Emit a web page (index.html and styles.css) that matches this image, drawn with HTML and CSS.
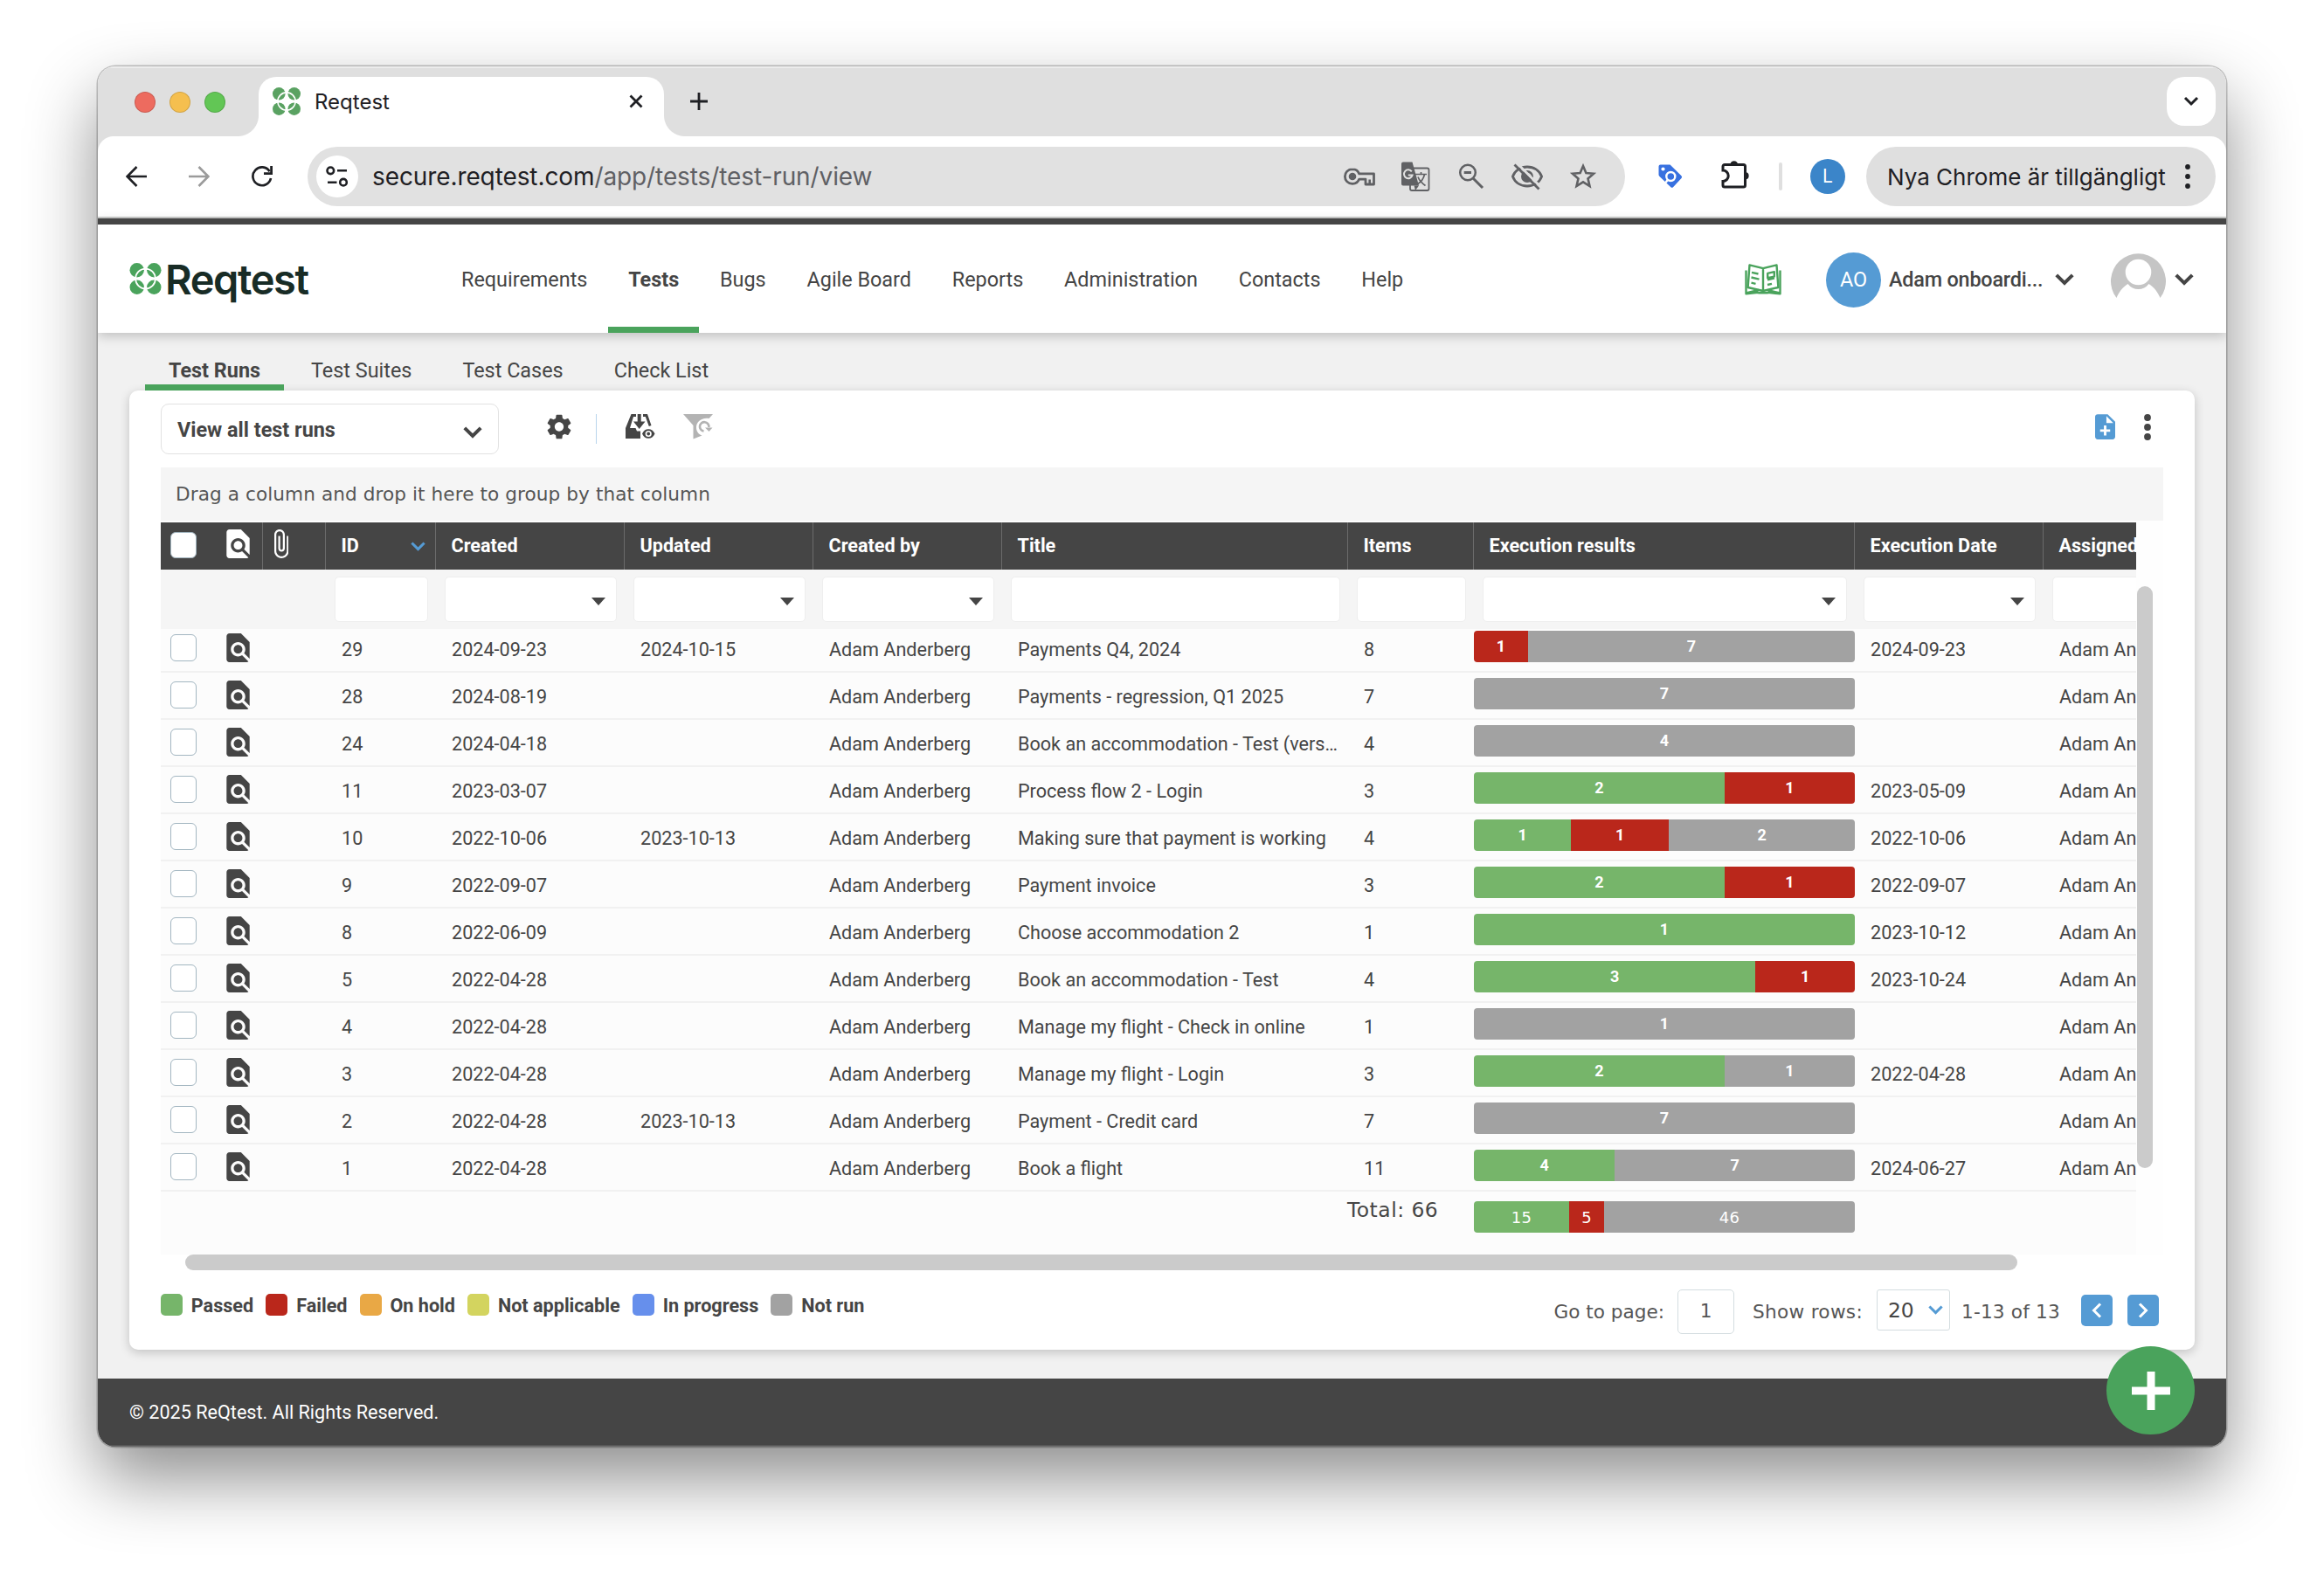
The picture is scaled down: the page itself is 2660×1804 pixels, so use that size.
FILE: index.html
```html
<!DOCTYPE html>
<html lang="en">
<head>
<meta charset="utf-8">
<title>Reqtest</title>
<link rel="stylesheet" href="styles.css">
</head>
<body>
<svg class="defs" aria-hidden="true">
  <symbol id="mark" viewBox="0 0 36 36">
    <g fill="currentColor"><circle cx="8.2" cy="8.2" r="8.2"/><circle cx="27.8" cy="8.2" r="8.2"/><circle cx="8.2" cy="27.8" r="8.2"/><circle cx="27.8" cy="27.8" r="8.2"/></g>
    <circle cx="18" cy="18" r="11.4" fill="none" stroke="#fff" stroke-width="1.8"/>
  </symbol>
  <symbol id="doc" viewBox="4 2 16 20"><path fill="currentColor" d="M20 19.59V8l-6-6H6c-1.1 0-1.99.9-1.99 2L4 20c0 1.1.89 2 1.99 2H18c.45 0 .85-.15 1.19-.4l-4.43-4.43c-.8.52-1.74.83-2.76.83-2.76 0-5-2.24-5-5s2.24-5 5-5 5 2.24 5 5c0 1.02-.31 1.96-.83 2.75L20 19.59zM9 13c0 1.66 1.34 3 3 3s3-1.34 3-3-1.34-3-3-3-3 1.34-3 3z"/></symbol>
  <symbol id="chev" viewBox="0 0 22 14"><path d="M1.8 1.8L11 11L20.2 1.8" fill="none" stroke="currentColor" stroke-width="4"/></symbol>
</svg>

<div class="window">
  <div class="tabstrip">
    <div class="lights"><i class="red"></i><i class="yellow"></i><i class="green"></i></div>
    <div class="tab">
      <svg class="favicon"><use href="#mark"/></svg>
      <span class="tab-title">Reqtest</span>
      <svg class="tab-close" viewBox="0 0 16 16"><path d="M1.5 1.5L14.5 14.5M14.5 1.5L1.5 14.5" stroke="#1f2024" stroke-width="2.8"/></svg>
    </div>
    <svg class="tab-new" viewBox="0 0 20 20"><path d="M10 0V20M0 10H20" stroke="#1f2024" stroke-width="2.8"/></svg>
    <div class="tab-search"><svg width="18" height="12" viewBox="0 0 18 12"><path d="M2 2L9 9L16 2" fill="none" stroke="#1f2024" stroke-width="3"/></svg></div>
  </div>

  <div class="toolbar">
    <svg class="tool" viewBox="0 0 24 24"><path d="M24 12H2M12.5 1L1.6 12L12.5 23" fill="none" stroke="#1f2024" stroke-width="2.6"/></svg>
    <svg class="tool" viewBox="0 0 24 24"><path d="M0 12H22M11.5 1L22.4 12L11.5 23" fill="none" stroke="#9b9b9b" stroke-width="2.6"/></svg>
    <svg class="tool" viewBox="0 0 24 24"><path d="M22 14A10.4 10.4 0 1 1 20.6 6.2" fill="none" stroke="#1f2024" stroke-width="2.7"/><path d="M22.6 0V8.6H14" fill="none" stroke="#1f2024" stroke-width="2.8"/></svg>
    <div class="omnibox">
      <div class="site"><svg width="26" height="24" viewBox="0 0 26 24" fill="none" stroke="#1f2024" stroke-width="2.6"><circle cx="5.3" cy="5.3" r="3.8"/><circle cx="20" cy="18.7" r="3.8"/><path d="M13 5.3H24M2 18.7H12.5"/></svg></div>
      <span class="url">secure.reqtest.com<span>/app/tests/test-run/view</span></span>
      <div class="omni-icons">
        <svg viewBox="0 0 36 36"><path d="M10 9.600C4.800 9.600 1.400 13.500 1.400 18s3.400 8.400 8.600 8.400c3.800 0 6.400-2 7.700-5.300H25V27h9.500V14.900H17.700C16.400 11.600 13.800 9.600 10 9.600Z" fill="none" stroke="#606164" stroke-width="2.8" stroke-linejoin="round"/><circle cx="10" cy="18" r="4.300" fill="#606164"/><path d="M29.700 21.500V27" stroke="#606164" stroke-width="2.600"/></svg>
        <svg viewBox="0 0 36 36"><rect x="12" y="8.500" width="21.500" height="25.500" rx="2" fill="none" stroke="#606164" stroke-width="1.800"/><path d="M4 1.500H14.500L22 28.500H4A2 2 0 0 1 2 26.500V3.500A2 2 0 0 1 4 1.500Z" fill="#606164"/><path d="M16.500 28.500H22L18 34Z" fill="#606164"/><path d="M13.800 12.300A4.900 4.900 0 1 0 14.600 16.500H9.800" fill="none" stroke="#e1e1e1" stroke-width="2"/><path d="M18 15.500H31M24.500 13V15.500M28.500 15.500C27.500 20.500 23.500 25 20 27M21 18.500C22.500 22.500 26 26 29.500 28.500" fill="none" stroke="#606164" stroke-width="1.700"/></svg>
        <svg viewBox="0 0 36 36"><circle cx="14" cy="13.500" r="8.800" fill="none" stroke="#606164" stroke-width="2.500"/><path d="M9.700 13.500H18" stroke="#606164" stroke-width="3"/><path d="M20 20L31 31" stroke="#606164" stroke-width="3"/></svg>
        <svg viewBox="0 0 36 36"><path d="M1.400 18C4 11 10.500 7 18 7S32 11 34.600 18C32 25 25.500 29 18 29S4 25 1.400 18Z" fill="none" stroke="#606164" stroke-width="2.800"/><circle cx="18" cy="18" r="7" fill="#606164"/><path d="M18.500 15.200a3.500 3.500 0 0 1 3.300 3.600" stroke="#e1e1e1" stroke-width="2.400" fill="none"/><path d="M6.500 3L34 30.500" stroke="#e1e1e1" stroke-width="3"/><path d="M3.500 4.500L31.500 32.500" stroke="#606164" stroke-width="2.800"/></svg>
        <svg viewBox="0 0 36 36"><path d="M18 6L21.400 14L30 14.700L23.500 20.400L25.500 29L18 24.400L10.500 29L12.500 20.400L6 14.700L14.600 14Z" fill="none" stroke="#606164" stroke-width="2.600"/></svg>
      </div>
    </div>
    <svg class="ext" viewBox="0 0 28 28"><path d="M2.500 .5H13.500L26.500 13.300Q27.800 14.700 26.500 16L17 26.200Q15.700 27.500 14.400 26.200L1.500 14Q.5 13 .5 12V2.500Q.5.5 2.500.5Z" fill="#3871e0"/><circle cx="5.500" cy="5.500" r="2.100" fill="#fff"/><circle cx="14.300" cy="14" r="5" fill="none" stroke="#fff" stroke-width="2.400"/><path d="M11 17.500L8.500 21" stroke="#fff" stroke-width="2.400"/></svg>
    <svg class="ext puzzle" viewBox="0 0 33 34"><path d="M4 5.500H25.500A2 2 0 0 1 27.500 7.500V29A2 2 0 0 1 25.500 31H4A2 2 0 0 1 2 29V24.500A6.200 6.200 0 0 0 2 12V7.500A2 2 0 0 1 4 5.500Z" fill="none" stroke="#1f2024" stroke-width="3"/><path d="M10.500 5A4.300 4.300 0 0 1 19 5ZM28 14A4.300 4.300 0 0 1 28 22.500Z" fill="#1f2024"/></svg>
    <i class="tool-sep"></i>
    <div class="profile">L</div>
    <div class="update"><span>Nya Chrome är tillgängligt</span><svg width="6" height="28" viewBox="0 0 6 28" fill="#1f2024"><circle cx="3" cy="3" r="2.900"/><circle cx="3" cy="14" r="2.900"/><circle cx="3" cy="25" r="2.900"/></svg></div>
  </div>

  <header class="header">
    <a class="logo"><svg><use href="#mark"/></svg><span>Reqtest</span></a>
    <nav class="nav">
      <a>Requirements</a><a class="on">Tests</a><a>Bugs</a><a>Agile Board</a><a>Reports</a><a>Administration</a><a>Contacts</a><a>Help</a>
    </nav>
    <div class="account">
      <svg class="book" viewBox="0 0 42 36" fill="none" stroke="#4aa35c" stroke-width="2.400" stroke-linejoin="round"><path d="M21 5.200L5.500 1.400L3.600 27L21 31L38.400 27L36.500 1.400ZM21 5.200V33"/><path d="M1.500 7.500V34.300L15.500 32.800M40.500 7.500V34.300L26.500 32.800M1.500 33.500L16 30M40.500 33.500L26 30M15.500 33.200H26.500"/><path d="M8 9.800L15.500 11.500M7.500 15.500L16.500 17.600M7.500 21.600L12.500 22.800M26 18.300L34 16.400M26 24L31 22.800M26.200 10.800L33.800 9.200V14.600L26.200 16.200Z"/></svg>
      <div class="org">AO</div>
      <span class="org-name">Adam onboardi...</span>
      <svg class="chev"><use href="#chev"/></svg>
      <svg class="avatar" viewBox="0 0 63 63"><path d="M6.500 52A31.500 31.500 0 1 1 56.500 52C54 46 49.500 39.500 43.500 36A15 15 0 0 1 19.500 36C13.500 39.500 9 46 6.500 52Z" fill="#c5c5c5"/><circle cx="31.500" cy="22.500" r="14.800" fill="#fff"/></svg>
      <svg class="chev"><use href="#chev"/></svg>
    </div>
  </header>

  <main class="content">
    <div class="subtabs"><a class="on">Test Runs</a><a>Test Suites</a><a>Test Cases</a><a>Check List</a></div>
    <section class="card">
      <div class="actions">
        <div class="view"><span>View all test runs</span><svg class="chev"><use href="#chev"/></svg></div>
        <svg class="gear" viewBox="2.200 2 19.600 20"><path fill="#454545" d="M19.140 12.940c.04-.3.06-.61.06-.94 0-.32-.02-.64-.07-.94l2.030-1.580c.18-.14.23-.41.12-.61l-1.920-3.320c-.12-.22-.37-.29-.59-.22l-2.390.96c-.5-.38-1.030-.7-1.620-.94l-.36-2.540c-.04-.24-.24-.41-.48-.41h-3.840c-.24 0-.43.17-.47.41l-.36 2.540c-.59.24-1.130.57-1.620.94l-2.390-.96c-.22-.08-.47 0-.59.22L2.740 8.870c-.12.21-.08.47.12.61l2.030 1.580c-.05.3-.09.63-.09.94s.02.64.07.94l-2.030 1.580c-.18.14-.23.41-.12.61l1.920 3.320c.12.22.37.29.59.22l2.390-.96c.5.38 1.030.7 1.620.94l.36 2.540c.05.24.24.41.48.41h3.840c.24 0 .44-.17.47-.41l.36-2.540c.59-.24 1.130-.56 1.620-.94l2.390.96c.22.08.47 0 .59-.22l1.920-3.320c.12-.22.07-.47-.12-.61l-2.010-1.580zM12 15.600c-1.980 0-3.600-1.620-3.600-3.600s1.620-3.600 3.600-3.600 3.600 1.620 3.600 3.600-1.620 3.600-3.600 3.600z"/></svg>
        <i class="action-sep"></i>
        <svg class="inbox" viewBox="0 0 34 29"><g fill="#454545"><path d="M6.500 0H12V3H9L5 16H11.500L13 19.500H17V28H0V16Z"/><path d="M13.700 0H17.700V8.500H22.500L15.700 17L9 8.500H13.700Z"/><path d="M20 0H25L29.500 13L26.800 14L22.800 3H20Z"/><path fill-rule="evenodd" d="M19 22.500C20.500 19 23 17.300 26.200 17.300S32 19 33.500 22.500C32 26 29.400 27.800 26.200 27.800S20.500 26 19 22.500ZM26.200 18.900A3.600 3.600 0 1 0 26.200 26.100A3.600 3.600 0 1 0 26.200 18.900ZM26.200 20.600A1.900 1.900 0 1 1 26.200 24.400A1.900 1.900 0 1 1 26.200 20.600Z"/></g></svg>
        <svg class="funnel" viewBox="0 0 34 29"><path d="M0 0H34L29.500 5C21 3.500 14.500 9 15 16C15.200 20 18 23.500 21.500 24.500L11.500 28.500V13Z" fill="#b3b3b3"/><path d="M23.500 19.500A5.200 5.200 0 1 1 29.300 15" fill="none" stroke="#b3b3b3" stroke-width="2.600"/><path d="M25 15.500H33.500L29.500 20Z" fill="#b3b3b3"/></svg>
        <svg class="add-doc" viewBox="4 2 16 20"><path fill="#559bd4" d="M14 2H6c-1.100 0-1.990.9-1.990 2L4 20c0 1.100.89 2 1.990 2H18c1.100 0 2-.9 2-2V8l-6-6zm2 14h-3v3h-2v-3H8v-2h3v-3h2v3h3v2zm-3-7V3.500L18.500 9H13z"/></svg>
        <svg class="more" viewBox="0 0 8 30" fill="#454545"><circle cx="4" cy="4" r="3.900"/><circle cx="4" cy="15" r="3.900"/><circle cx="4" cy="26" r="3.900"/></svg>
      </div>

      <div class="group">Drag a column and drop it here to group by that column</div>

      <div class="grid">
        <div class="table">
          <div class="row head">
            <div class="pick"><i class="box"></i><svg class="doc"><use href="#doc"/></svg></div>
            <div><svg class="clip" viewBox="7 1 11 22"><path fill="#fff" d="M16.500 6v11.500c0 2.210-1.790 4-4 4s-4-1.790-4-4V5c0-1.380 1.120-2.500 2.500-2.500s2.500 1.120 2.500 2.500v10.500c0 .55-.45 1-1 1s-1-.45-1-1V6H10v9.500c0 1.380 1.120 2.500 2.500 2.500s2.500-1.120 2.500-2.500V5c0-2.210-1.790-4-4-4S7 2.790 7 5v12.500c0 3.040 2.460 5.500 5.500 5.500s5.500-2.460 5.500-5.500V6h-1.500z"/></svg></div>
            <div>ID<svg class="sort"><use href="#chev"/></svg></div><div>Created</div><div>Updated</div><div>Created by</div><div>Title</div><div>Items</div><div>Execution results</div><div>Execution Date</div><div>Assigned to</div>
          </div>
          <div class="row filters"><div></div><div></div><div><i></i></div><div><i class="dd"></i></div><div><i class="dd"></i></div><div><i class="dd"></i></div><div><i></i></div><div><i></i></div><div><i class="dd"></i></div><div><i class="dd"></i></div><div><i></i></div></div>
          <div class="body">
            <div class="row"><div class="pick"><i class="box"></i><svg class="doc"><use href="#doc"/></svg></div><div></div><div>29</div><div>2024-09-23</div><div>2024-10-15</div><div>Adam Anderberg</div><div>Payments Q4, 2024</div><div>8</div><div class="bar"><b class="f" style="width:14.2%">1</b><b class="n" style="width:85.8%">7</b></div><div>2024-09-23</div><div>Adam Anderberg</div></div>
            <div class="row"><div class="pick"><i class="box"></i><svg class="doc"><use href="#doc"/></svg></div><div></div><div>28</div><div>2024-08-19</div><div></div><div>Adam Anderberg</div><div>Payments - regression, Q1 2025</div><div>7</div><div class="bar"><b class="n" style="width:100%">7</b></div><div></div><div>Adam Anderberg</div></div>
            <div class="row"><div class="pick"><i class="box"></i><svg class="doc"><use href="#doc"/></svg></div><div></div><div>24</div><div>2024-04-18</div><div></div><div>Adam Anderberg</div><div>Book an accommodation - Test (vers…</div><div>4</div><div class="bar"><b class="n" style="width:100%">4</b></div><div></div><div>Adam Anderberg</div></div>
            <div class="row"><div class="pick"><i class="box"></i><svg class="doc"><use href="#doc"/></svg></div><div></div><div>11</div><div>2023-03-07</div><div></div><div>Adam Anderberg</div><div>Process flow 2 - Login</div><div>3</div><div class="bar"><b class="p" style="width:65.8%">2</b><b class="f" style="width:34.2%">1</b></div><div>2023-05-09</div><div>Adam Anderberg</div></div>
            <div class="row"><div class="pick"><i class="box"></i><svg class="doc"><use href="#doc"/></svg></div><div></div><div>10</div><div>2022-10-06</div><div>2023-10-13</div><div>Adam Anderberg</div><div>Making sure that payment is working</div><div>4</div><div class="bar"><b class="p" style="width:25.5%">1</b><b class="f" style="width:25.7%">1</b><b class="n" style="width:48.8%">2</b></div><div>2022-10-06</div><div>Adam Anderberg</div></div>
            <div class="row"><div class="pick"><i class="box"></i><svg class="doc"><use href="#doc"/></svg></div><div></div><div>9</div><div>2022-09-07</div><div></div><div>Adam Anderberg</div><div>Payment invoice</div><div>3</div><div class="bar"><b class="p" style="width:65.8%">2</b><b class="f" style="width:34.2%">1</b></div><div>2022-09-07</div><div>Adam Anderberg</div></div>
            <div class="row"><div class="pick"><i class="box"></i><svg class="doc"><use href="#doc"/></svg></div><div></div><div>8</div><div>2022-06-09</div><div></div><div>Adam Anderberg</div><div>Choose accommodation 2</div><div>1</div><div class="bar"><b class="p" style="width:100%">1</b></div><div>2023-10-12</div><div>Adam Anderberg</div></div>
            <div class="row"><div class="pick"><i class="box"></i><svg class="doc"><use href="#doc"/></svg></div><div></div><div>5</div><div>2022-04-28</div><div></div><div>Adam Anderberg</div><div>Book an accommodation - Test</div><div>4</div><div class="bar"><b class="p" style="width:73.9%">3</b><b class="f" style="width:26.1%">1</b></div><div>2023-10-24</div><div>Adam Anderberg</div></div>
            <div class="row"><div class="pick"><i class="box"></i><svg class="doc"><use href="#doc"/></svg></div><div></div><div>4</div><div>2022-04-28</div><div></div><div>Adam Anderberg</div><div>Manage my flight - Check in online</div><div>1</div><div class="bar"><b class="n" style="width:100%">1</b></div><div></div><div>Adam Anderberg</div></div>
            <div class="row"><div class="pick"><i class="box"></i><svg class="doc"><use href="#doc"/></svg></div><div></div><div>3</div><div>2022-04-28</div><div></div><div>Adam Anderberg</div><div>Manage my flight - Login</div><div>3</div><div class="bar"><b class="p" style="width:65.8%">2</b><b class="n" style="width:34.2%">1</b></div><div>2022-04-28</div><div>Adam Anderberg</div></div>
            <div class="row"><div class="pick"><i class="box"></i><svg class="doc"><use href="#doc"/></svg></div><div></div><div>2</div><div>2022-04-28</div><div>2023-10-13</div><div>Adam Anderberg</div><div>Payment - Credit card</div><div>7</div><div class="bar"><b class="n" style="width:100%">7</b></div><div></div><div>Adam Anderberg</div></div>
            <div class="row"><div class="pick"><i class="box"></i><svg class="doc"><use href="#doc"/></svg></div><div></div><div>1</div><div>2022-04-28</div><div></div><div>Adam Anderberg</div><div>Book a flight</div><div>11</div><div class="bar"><b class="p" style="width:37%">4</b><b class="n" style="width:63%">7</b></div><div>2024-06-27</div><div>Adam Anderberg</div></div>
          </div>
          <div class="row totals"><div></div><div></div><div></div><div></div><div></div><div></div><div></div><div class="total">Total: 66</div><div class="bar"><b class="p" style="width:25%">15</b><b class="f" style="width:9.2%">5</b><b class="n" style="width:65.8%">46</b></div><div></div><div></div></div>
        </div>
        <i class="vscroll"></i>
      </div>
      <i class="hscroll"></i>

      <div class="bottom">
        <div class="legend">
          <span><i class="p"></i><em>Passed</em></span><span><i class="f"></i><em>Failed</em></span><span><i class="h"></i><em>On hold</em></span><span><i class="na"></i><em>Not applicable</em></span><span><i class="ip"></i><em>In progress</em></span><span><i class="n"></i><em>Not run</em></span>
        </div>
        <div class="pager">
          <span class="goto">Go to page:</span><div class="page">1</div>
          <span class="show">Show rows:</span><div class="rows"><span>20</span><svg><use href="#chev"/></svg></div>
          <span class="range">1-13 of 13</span>
          <a><svg width="12" height="18" viewBox="0 0 12 18"><path d="M10 1.500L2.500 9L10 16.500" fill="none" stroke="#fff" stroke-width="3"/></svg></a>
          <a><svg width="12" height="18" viewBox="0 0 12 18"><path d="M2 1.500L9.500 9L2 16.500" fill="none" stroke="#fff" stroke-width="3"/></svg></a>
        </div>
      </div>
    </section>
  </main>
  <footer class="footer">© 2025 ReQtest. All Rights Reserved.</footer>
  <button class="fab" aria-label="Add"><svg width="44" height="44" viewBox="0 0 44 44"><path d="M22 0V44M0 22H44" stroke="#fff" stroke-width="9"/></svg></button>
</div>
</body>
</html>
```
FILE: styles.css
```css
* { box-sizing: border-box; }
body {
  margin: 0;
  height: 1804px;
  overflow: hidden;
  background: #fff;
  color: #454545;
  font-family: Roboto, "Liberation Sans", sans-serif;
  font-size: 21.6px;
}
i, em { font-style: normal; }
svg { display: block; flex: none; }
.defs { position: absolute; width: 0; height: 0; }

.window {
  position: relative;
  display: flex;
  flex-direction: column;
  width: 2436px;
  height: 1580px;
  margin: 76px 112px 0;
  border-radius: 20px;
  overflow: hidden;
  background: #f1f1f1;
}
body::before {
  content: "";
  position: absolute;
  left: 112px;
  top: 76px;
  width: 2436px;
  height: 1580px;
  border-radius: 20px;
  box-shadow: 0 0 0 1.5px rgba(0,0,0,.22), 0 36px 80px rgba(0,0,0,.45);
}

/* Browser chrome */
.tabstrip {
  display: flex;
  align-items: flex-start;
  flex: none;
  height: 80px;
  padding-top: 12px;
  background: #dfdfdf;
  box-shadow: inset 0 2px 0 #ececec;
  font-family: Inter, "Liberation Sans", sans-serif;
}
.lights { display: flex; gap: 16px; margin: 17px 38px 0 42px; }
.lights i { width: 24px; height: 24px; border-radius: 50%; border: 1px solid rgba(0,0,0,.14); }
.lights .red { background: #ed6b5f; }
.lights .yellow { background: #f5bf4f; }
.lights .green { background: #62c655; }
.tab {
  position: relative;
  display: flex;
  align-items: center;
  width: 464px;
  height: 68px;
  padding: 0 24px 12px 16px;
  border-radius: 20px 20px 0 0;
  background: #fff;
}
.tab::before, .tab::after {
  content: "";
  position: absolute;
  bottom: 0;
  width: 24px;
  height: 24px;
}
.tab::before { left: -24px; background: radial-gradient(circle at 0 0, transparent 23.5px, #fff 24.5px); }
.tab::after { right: -24px; background: radial-gradient(circle at 100% 0, transparent 23.5px, #fff 24.5px); }
.favicon { width: 32px; height: 32px; color: #5aa262; }
.tab-title { margin-left: 16px; font-size: 24px; color: #1f2024; }
.tab-close { width: 16px; height: 16px; margin-left: auto; }
.tab-new { width: 20px; height: 20px; margin: 18px 0 0 30px; }
.tab-search {
  display: flex;
  align-items: center;
  justify-content: center;
  width: 56px;
  height: 56px;
  margin: 0 12px 0 auto;
  border-radius: 20px;
  background: #fff;
}
.toolbar {
  display: flex;
  align-items: center;
  flex: none;
  height: 94px;
  padding: 0 12px 0 32px;
  border-bottom: 2px solid #c9cac9;
  background: radial-gradient(circle at 18px 18px, #fff 17.5px, #dfdfdf 18.5px) 0 0 / 18px 18px no-repeat,
    radial-gradient(circle at 0 18px, #fff 17.5px, #dfdfdf 18.5px) 100% 0 / 18px 18px no-repeat, #fff;
  font-family: Inter, "Liberation Sans", sans-serif;
  color: #1f2024;
}
.tool { width: 24px; height: 24px; margin-right: 48px; }
.tool + .tool + .tool { margin-right: 40px; }
.omnibox {
  display: flex;
  align-items: center;
  width: 1508px;
  height: 68px;
  padding: 0 30px 0 10px;
  border-radius: 34px;
  background: #e1e1e1;
}
.site {
  display: flex;
  align-items: center;
  justify-content: center;
  width: 48px;
  height: 48px;
  border-radius: 50%;
  background: #fff;
}
.url { margin-left: 16px; font-size: 28px; letter-spacing: -.1px; }
.url span { color: #5f6064; }
.omni-icons { display: flex; gap: 28px; margin-left: auto; }
.omni-icons svg { width: 36px; height: 36px; }
.ext { width: 28px; height: 28px; margin-left: 38px; }
.puzzle { width: 33px; height: 34px; margin: -4px 0 0 44px; }
.tool-sep { width: 4px; height: 32px; margin: 0 32px 0 33px; border-radius: 2px; background: #dfdfdf; }
.profile {
  width: 40px;
  height: 40px;
  border-radius: 50%;
  background: #3b85c9;
  color: #fff;
  font-size: 21px;
  line-height: 40px;
  text-align: center;
}
.update {
  display: flex;
  align-items: center;
  justify-content: space-between;
  flex: 1;
  height: 68px;
  margin-left: 24px;
  padding: 0 29px 0 24px;
  border-radius: 34px;
  background: #dfdfdf;
  font-size: 26px;
}

/* Application header */
.header {
  position: relative;
  display: flex;
  align-items: stretch;
  flex: none;
  height: 131px;
  border-top: 7px solid #454545;
  background: #fff;
  box-shadow: 0 4px 12px rgba(0,0,0,.2);
  font-size: 23.4px;
}
.logo {
  display: flex;
  align-items: center;
  width: 357px;
  padding-left: 36px;
  color: #182c26;
  font: 600 47px Inter, "Liberation Sans", sans-serif;
  letter-spacing: -1.4px;
}
.logo svg { width: 37px; height: 36px; margin-right: 4px; color: #4aa35c; }
.nav { display: flex; gap: .8px; margin-left: 36px; }
.nav a { display: flex; align-items: center; padding: 9px 23px 0; border-bottom: 7px solid transparent; }
.nav .on { border-color: #4aa35c; font-weight: 700; }
.account { display: flex; align-items: center; margin-left: auto; padding: 2px 37px 0 0; }
.book { width: 42px; height: 36px; margin-right: 51px; }
.org {
  width: 63px;
  height: 63px;
  margin-right: 9px;
  border-radius: 50%;
  background: #559bd4;
  color: #fff;
  line-height: 62px;
  text-align: center;
}
.org-name { width: 190px; font-weight: 500; letter-spacing: -.2px; }
.chev { width: 22px; height: 14px; }
.avatar { width: 63px; height: 63px; margin: 0 10px 0 42px; }

/* Content */
.content { flex: 1; padding: 0 36px; }
.subtabs { display: flex; gap: 4px; height: 66px; padding: 20px 0 0 18px; font-size: 23.4px; }
.subtabs a { padding: 9px 27px 0; line-height: 28px; border-bottom: 7px solid transparent; }
.subtabs .on { border-color: #4aa35c; font-weight: 700; }
.card {
  height: 1098px;
  padding: 0 36px;
  border-radius: 10px;
  background: #fff;
  box-shadow: 0 3px 12px rgba(0,0,0,.2);
}
.actions { display: flex; align-items: center; height: 88px; padding-bottom: 5px; }
.view {
  display: flex;
  align-items: center;
  justify-content: space-between;
  width: 387px;
  height: 58px;
  margin-top: 5px;
  padding: 0 18px;
  border: 1.5px solid #e2e2e2;
  border-radius: 9px;
  font-size: 23.4px;
  font-weight: 700;
}
.view span { padding-top: 1px; }
.view .chev { margin-top: 7px; }
.gear { width: 28px; height: 29px; margin-left: 55px; }
.action-sep { width: 1.5px; height: 34px; margin: 4px 32.5px 0 27.5px; background: #b9d5ec; }
.inbox { width: 34px; height: 29px; }
.funnel { width: 34px; height: 29px; margin-left: 32px; }
.add-doc { width: 23px; height: 29px; margin-left: auto; }
.more { width: 8px; height: 30px; margin: 0 14px 0 33px; }
.group {
  height: 61px;
  padding-left: 17px;
  background: #f5f5f5;
  color: #555;
  font: 21.6px/62px "DejaVu Sans", sans-serif;
  letter-spacing: .08px;
}

.grid { position: relative; height: 840px; padding-top: 2px; background: #fefefe; }
.table { width: 2261px; height: 838px; overflow: hidden; background: #fcfcfc; }
.row {
  display: grid;
  grid-template-columns: 116px 72px 126px 216px 216px 216px 396px 144px 436px 216px 216px;
  width: 2370px;
  height: 54px;
  border-bottom: 2px solid #f1f1f1;
}
.row > div { display: flex; align-items: center; padding: 2px 10px 0 19px; white-space: nowrap; min-width: 0; }
.row .pick { padding: 0 0 1px 11px; }
.box { width: 30px; height: 31px; border: 1.5px solid #a3b6c1; border-radius: 6px; background: #fff; }
.doc { width: 27px; height: 33px; margin-left: 34px; color: #454545; }
.head { border: 0; background: #454545; color: #fff; font-weight: 700; }
.row.head > div { padding-top: 0; padding-bottom: 2px; }
.head > div + div { border-left: 1.5px solid #6b6b6b; padding-left: 17.5px; }
.head .doc { margin-top: -3px; color: #fff; }
.head .box { height: 30px; }
.clip { width: 16.5px; height: 33px; margin: -3px 0 0 -5px; }
.sort { width: 17px; height: 11px; margin: 2px 1px 0 auto; color: #559bd4; }
.filters { height: 68px; border: 0; background: #f5f5f5; }
.row.filters > div { padding: 8px 8.5px 8px 10.5px; }
.filters i { position: relative; width: 100%; height: 52px; border: 1px solid #eee; border-radius: 5px; background: #fff; }
.dd::after {
  content: "";
  position: absolute;
  right: 12px;
  top: 23px;
  border: 8.5px solid transparent;
  border-top: 9px solid #454545;
  border-bottom: 0;
}
.body { height: 644px; overflow: hidden; }
.body .row:first-child { margin-top: -4px; }
.row > .bar { align-items: flex-start; margin-right: -1px; padding: 6px 0 0 1px; }
.bar b { height: 36px; color: #fff; font-size: 18px; line-height: 36px; text-align: center; }
.bar b:first-child { border-radius: 4px 0 0 4px; }
.bar b:last-child { border-radius: 0 4px 4px 0; }
.bar b:only-child { border-radius: 4px; }
.p { background: #76b56a; }
.f { background: #ba271b; }
.n { background: #a2a2a2; }
.h { background: #e9a845; }
.na { background: #d3d45f; }
.ip { background: #668fec; }
.totals { height: 72px; border: 0; font-family: "DejaVu Sans", sans-serif; }
.row > .total { align-items: flex-start; padding: 7px 0 0; font-size: 23.4px; letter-spacing: .5px; }
.totals > .bar { padding-top: 11px; }
.totals b { font-weight: 400; letter-spacing: .3px; line-height: 37px; }
.vscroll { position: absolute; left: 2262px; top: 75px; width: 18px; height: 666px; border-radius: 9px; background: #cbcbcb; }
.hscroll { display: block; width: 2097px; height: 18px; margin-left: 28px; border-radius: 9px; background: #cbcbcb; }

.bottom { display: flex; justify-content: space-between; }
.legend { display: flex; gap: 14.2px; padding-top: 27px; font-weight: 700; }
.legend span { display: flex; gap: 9.8px; }
.legend i { width: 25px; height: 25px; border-radius: 5px; }
.legend em { line-height: 28px; }
.pager { display: flex; align-items: center; height: 51px; margin: 22px 5px 0 0; color: #555; font: 21.6px "DejaVu Sans", sans-serif; }
.page { width: 65px; height: 51px; margin: 0 21px 0 15px; border: 1.5px solid #d4dde0; border-radius: 5px; line-height: 48px; text-align: center; }
.show { letter-spacing: .3px; }
.rows { display: flex; align-items: center; justify-content: space-between; width: 84px; height: 47px; margin: -4px 13px 0 16px; padding: 0 7px 0 12px; border: 1.5px solid #d4dde0; border-radius: 3px; color: #454545; font-size: 23.4px; }
.rows svg { width: 17px; height: 11px; color: #559bd4; }
.range { margin-right: 7px; letter-spacing: .2px; }
.pager a { display: flex; align-items: center; justify-content: center; width: 36px; height: 36px; margin: -3px 0 0 17px; border-radius: 5px; background: #559bd4; }

.footer { flex: none; height: 78px; padding-left: 36px; background: #454545; color: #fff; line-height: 77px; box-shadow: inset 0 -1.5px 0 #6a6a6a; }
.fab {
  position: absolute;
  right: 36px;
  bottom: 14px;
  display: flex;
  align-items: center;
  justify-content: center;
  width: 101px;
  height: 101px;
  padding: 0;
  border: 0;
  border-radius: 50%;
  background: #4aa35c;
}
```
